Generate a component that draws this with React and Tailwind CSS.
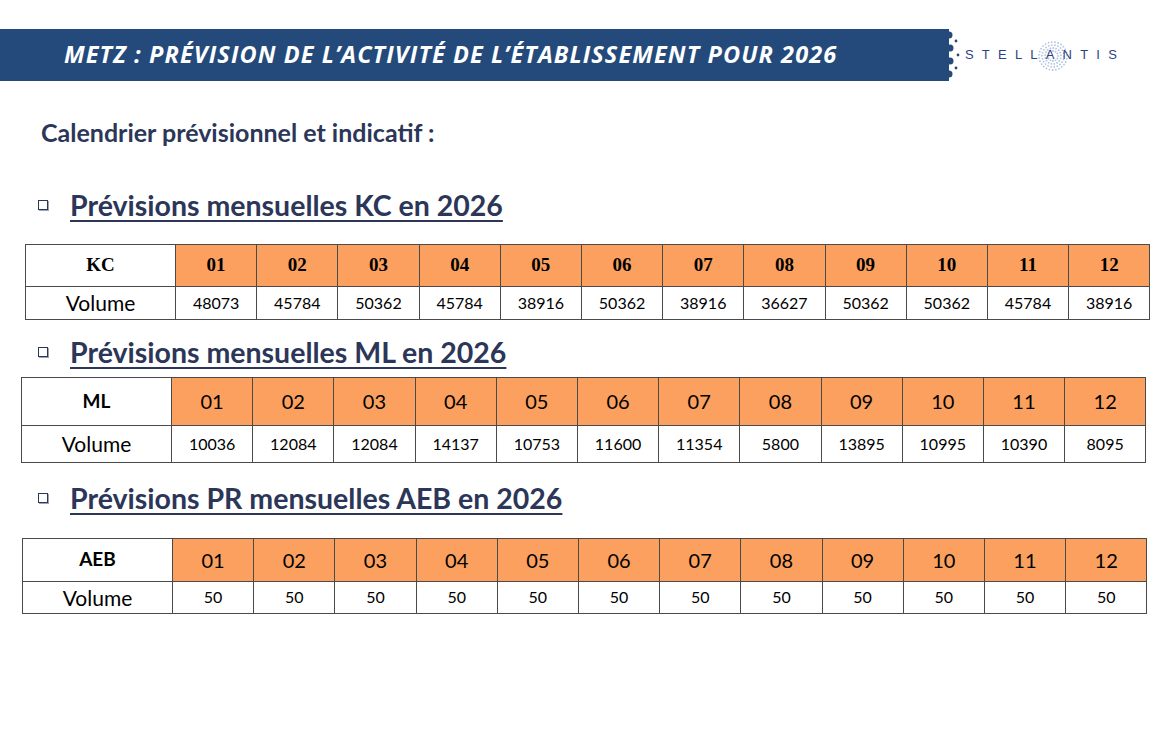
import React from "react";

const months = ["01", "02", "03", "04", "05", "06", "07", "08", "09", "10", "11", "12"];

const tables = [
  {
    key: "kc",
    title: "Prévisions mensuelles KC en 2026",
    label: "KC",
    values: ["48073", "45784", "50362", "45784", "38916", "50362", "38916", "36627", "50362", "50362", "45784", "38916"],
    serifHead: true,
    box: "ml-[25px] mt-[23px]",
    head: "h-[42px]",
    row: "h-[32px]",
  },
  {
    key: "ml",
    title: "Prévisions mensuelles ML en 2026",
    label: "ML",
    values: ["10036", "12084", "12084", "14137", "10753", "11600", "11354", "5800", "13895", "10995", "10390", "8095"],
    serifHead: false,
    box: "ml-[21px] mt-[9px]",
    head: "h-[48px]",
    row: "h-[37px]",
  },
  {
    key: "aeb",
    title: "Prévisions PR mensuelles AEB en 2026",
    label: "AEB",
    values: Array(12).fill("50"),
    serifHead: false,
    box: "ml-[22px] mt-[24px]",
    head: "h-[43px]",
    row: "h-[32px]",
  },
];

const sans = "font-['Lato','Noto_Sans',sans-serif]";

// dotted halo of the Stellantis mark, drawn round the A
function LogoDots() {
  const dots = [];
  for (let ring = 0; ring < 4; ring++) {
    const r = 5 + ring * 3;
    const n = 12 + ring * 5;
    for (let i = 0; i < n; i++) {
      const a = (i / n) * Math.PI * 2 + ring * 0.3;
      dots.push(
        <circle key={ring + "-" + i} cx={20 + r * Math.cos(a)} cy={20 + r * Math.sin(a)} r={0.9} fill="#8fa6d6" opacity={0.7} />
      );
    }
  }
  return (
    <svg width="40" height="40" viewBox="0 0 40 40" className="absolute left-[68px] top-[7px]">
      {dots}
    </svg>
  );
}

function BarEdge() {
  return (
    <svg width="22" height="52" viewBox="0 0 22 52" className="shrink-0">
      <rect x="0" y="0" width="3" height="52" fill="#234a7b" />
      <circle cx="3" cy="6" r="3.5" fill="#234a7b" />
      <circle cx="4" cy="19" r="3.5" fill="#234a7b" />
      <circle cx="4" cy="32" r="3.5" fill="#234a7b" />
      <circle cx="3" cy="45" r="3.5" fill="#234a7b" />
      <circle cx="10" cy="12" r="1.4" fill="#234a7b" />
      <circle cx="12" cy="26" r="1.4" fill="#234a7b" />
      <circle cx="10" cy="39" r="1.4" fill="#234a7b" />
    </svg>
  );
}

function Heading({ children, className }) {
  return (
    <div className={"flex items-center " + className}>
      <span className="ml-[38px] block h-[10px] w-[10px] border-[1.5px] border-[#2b3658] shadow-[1px_1px_0_#9aa3b8]" />
      <h2
        className={
          "ml-[22px] text-[28.5px] font-bold leading-[32px] text-[#2b3658] underline decoration-[1.5px] underline-offset-[4px] decoration-[#2b3658] " +
          sans
        }
      >
        {children}
      </h2>
    </div>
  );
}

function ForecastTable({ t }) {
  const headFont = t.serifHead
    ? "font-['Liberation_Serif',serif] font-bold text-[19px]"
    : sans + " text-[20px]";
  return (
    <table className={"border-collapse table-fixed w-[1124px] " + t.box}>
      <colgroup>
        <col className="w-[150px]" />
        {months.map((m) => (
          <col key={m} className="w-[81.2px]" />
        ))}
      </colgroup>
      <tbody>
        <tr className={t.head}>
          <th
            className={
              "border-[1.5px] border-[#4a4a4a] bg-white text-center text-black " +
              (t.serifHead ? "font-['Liberation_Serif',serif] font-bold text-[19px]" : sans + " font-bold text-[19px]")
            }
          >
            {t.label}
          </th>
          {months.map((m) => (
            <td key={m} className={"border-[1.5px] border-[#4a4a4a] bg-[#fba05f] text-center text-black " + headFont}>
              {m}
            </td>
          ))}
        </tr>
        <tr className={t.row}>
          <td className={"border-[1.5px] border-[#4a4a4a] text-center text-[21px] text-black " + sans}>Volume</td>
          {t.values.map((v, i) => (
            <td key={i} className={"border-[1.5px] border-[#4a4a4a] text-center text-[16px] text-black " + sans}>
              {v}
            </td>
          ))}
        </tr>
      </tbody>
    </table>
  );
}

export default function App() {
  return (
    <div className="relative h-[745px] w-[1170px] overflow-hidden bg-white">
      {/* Title bar and logo */}
      <div className="mt-[29px] flex h-[52px] items-stretch">
        <div className="flex w-[946px] items-center bg-[#234a7b] pl-[64px]">
          <h1 className="whitespace-nowrap font-['Open_Sans','Noto_Sans',sans-serif] text-[23.5px] font-bold italic tracking-[1.1px] text-white">
            METZ : PRÉVISION DE L’ACTIVITÉ DE L’ÉTABLISSEMENT POUR 2026
          </h1>
        </div>
        <BarEdge />
        <div className="relative -ml-[3px] flex items-center">
          <LogoDots />
          <span className="relative font-['Liberation_Sans',sans-serif] text-[13px] font-medium tracking-[8.2px] text-[#2e3f82]">
            STELLANTIS
          </span>
        </div>
      </div>

      <p className={"ml-[41px] mt-[36px] text-[25px] font-bold leading-[30px] text-[#2b3658] " + sans}>
        Calendrier prévisionnel et indicatif :
      </p>

      <Heading className="mt-[42px]">{tables[0].title}</Heading>
      <ForecastTable t={tables[0]} />

      <Heading className="mt-[16px]">{tables[1].title}</Heading>
      <ForecastTable t={tables[1]} />

      <Heading className="mt-[19px]">{tables[2].title}</Heading>
      <ForecastTable t={tables[2]} />
    </div>
  );
}
